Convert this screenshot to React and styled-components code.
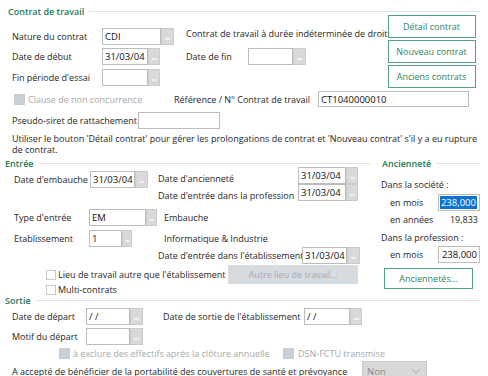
import styled, { createGlobalStyle } from "styled-components";

const GlobalStyle = createGlobalStyle`
  body {
    margin: 0;
    background: #ffffff;
    font-family: "Open Sans", "Noto Sans", Arial, sans-serif;
    font-size: 9px;
    color: #262626;
  }
  * { box-sizing: border-box; }
`;

const Page = styled.div`
  width: 488px;
  height: 376px;
  overflow: hidden;
  padding-top: 4px;
`;

// ? Group headers
const Legend = styled.div`
  display: flex;
  align-items: center;
  height: ${(p) => p.$h || 12}px;
  padding-left: ${(p) => p.$left || 5}px;
  padding-right: ${(p) => p.$right || 0}px;
  color: #227a55;
  font-weight: 600;
  font-size: 9px;
  &::after {
    content: "";
    flex: 1;
    height: 1px;
    margin-left: 5px;
    background: #e2e2e2;
  }
`;

const Row = styled.div`
  display: flex;
  align-items: ${(p) => p.$align || "center"};
  height: ${(p) => p.$h || 17}px;
  padding-left: ${(p) => p.$left || 0}px;
  margin-top: ${(p) => p.$top || 0}px;
  white-space: nowrap;
`;

const Label = styled.span`
  flex-shrink: 0;
  width: ${(p) => (p.$w ? `${p.$w}px` : "auto")};
  margin-left: ${(p) => p.$ml || 0}px;
  color: ${(p) => (p.$disabled ? "#a8a8a8" : "#262626")};
  text-align: ${(p) => p.$align || "left"};
  line-height: 11px;
`;

const TextBox = styled.div`
  flex-shrink: 0;
  width: ${(p) => p.$w}px;
  height: ${(p) => p.$h || 17}px;
  border: 1px solid #bcbcbc;
  background: #fff;
  padding: 0 2px;
  display: flex;
  align-items: center;
  justify-content: ${(p) => (p.$right ? "flex-end" : "flex-start")};
  font-size: 9.5px;
  color: #111;
`;

const Selected = styled.span`
  background: #0a74d6;
  color: #fff;
  padding: 0 1px;
`;

const Lookup = styled.div`
  flex-shrink: 0;
  width: ${(p) => p.$w || 13}px;
  height: 17px;
  border: 1px solid #cbcbcb;
  background: #d9d9d9;
  display: flex;
  align-items: flex-end;
  justify-content: center;
  padding-bottom: 4px;
  &::after {
    content: "";
    width: 5px;
    height: 2px;
    background: #efefef;
  }
`;

const Top = styled.div`
  display: flex;
  margin-top: -3px;
  padding-left: 12px;
  padding-right: 16px;
`;

const LeftRows = styled.div`
  flex: 1;
  display: flex;
  flex-direction: column;
  gap: 3px;
  padding-top: 13px;
`;

const ButtonStack = styled.div`
  display: flex;
  flex-direction: column;
  gap: 2px;
`;

const GreenButton = styled.div`
  width: ${(p) => p.$w || 88}px;
  height: ${(p) => p.$h || 23}px;
  margin-left: ${(p) => p.$ml || 0}px;
  margin-top: ${(p) => p.$top || 0}px;
  border: 1px solid #4f9f80;
  background: #fff;
  color: #2a8460;
  display: flex;
  align-items: center;
  justify-content: center;
  font-size: 9px;
`;

const GreyButton = styled.div`
  flex-shrink: 0;
  width: ${(p) => p.$w}px;
  height: ${(p) => p.$h || 19}px;
  margin-left: ${(p) => p.$ml || 0}px;
  background: #d6dbe0;
  color: #a3a9ae;
  display: flex;
  align-items: center;
  justify-content: center;
`;

const Check = styled.span`
  flex-shrink: 0;
  width: ${(p) => p.$size || 11}px;
  height: ${(p) => p.$size || 11}px;
  margin-left: ${(p) => p.$ml || 0}px;
  margin-right: ${(p) => p.$mr || 3}px;
  border: 1px solid ${(p) => (p.$disabled ? "#c3ccd4" : "#c9c9c9")};
  background: ${(p) => (p.$disabled ? "#c8d1da" : "#fff")};
`;

const Note = styled.p`
  margin: 4px 2px 0 12px;
  line-height: 11px;
`;

const Columns = styled.div`
  display: flex;
  margin-top: 2px;
`;

const EntreeCol = styled.div`
  width: 370px;
  flex-shrink: 0;
`;

const AncCol = styled.div`
  width: 103px;
  margin-left: 7px;
  flex-shrink: 0;
`;

const Pair = styled.div`
  display: flex;
  align-items: flex-start;
  margin-top: -2px;
  padding-left: 14px;
`;

const SubRows = styled.div`
  display: flex;
  flex-direction: column;
  margin-left: 10px;
`;

const Combo = styled.div`
  flex-shrink: 0;
  width: 65px;
  height: 20px;
  background: #d8d8d8;
  border: 1px solid #cbcbcb;
  color: #8c8c8c;
  display: flex;
  align-items: center;
  justify-content: space-between;
  padding: 0 6px 0 4px;
  font-size: 9.5px;
`;

const Chevron = () => (
  <svg width="8" height="5" viewBox="0 0 8 5">
    <path d="M0.5 0.5 L4 4 L7.5 0.5" fill="none" stroke="#a4a4a4" strokeWidth="1" />
  </svg>
);

export default function App() {
  return (
    <Page>
      <GlobalStyle />

      <Legend $left={8} $right={8} $h={14}>Contrat de travail</Legend>
      <Top>
        <LeftRows>
          <Row>
            <Label $w={90}>Nature du contrat</Label>
            <TextBox $w={59}>CDI</TextBox>
            <Lookup />
            <Label $ml={12} style={{ alignSelf: "flex-start" }}>
              Contrat de travail à durée indéterminée de droit
            </Label>
          </Row>
          <Row>
            <Label $w={90}>Date de début</Label>
            <TextBox $w={46}>31/03/04</TextBox>
            <Lookup $w={12} />
            <Label $w={62} $ml={26}>Date de fin</Label>
            <TextBox $w={45} />
            <Lookup />
          </Row>
          <Row $top={1}>
            <Label $w={90}>Fin période d'essai</Label>
            <TextBox $w={46} />
            <Lookup $w={12} />
          </Row>
        </LeftRows>
        <ButtonStack>
          <GreenButton>Détail contrat</GreenButton>
          <GreenButton>Nouveau contrat</GreenButton>
          <GreenButton>Anciens contrats</GreenButton>
        </ButtonStack>
      </Top>

      <Row $left={14} $top={3} $h={16}>
        <Check $disabled />
        <Label $w={146} $disabled>Clause de non concurrence</Label>
        <Label $w={144}>Référence / N° Contrat de travail</Label>
        <TextBox $w={151} $h={16}>CT1040000010</TextBox>
      </Row>
      <Row $left={12} $top={5}>
        <Label $w={126}>Pseudo-siret de rattachement</Label>
        <TextBox $w={82} />
      </Row>
      <Note>
        Utiliser le bouton 'Détail contrat' pour gérer les prolongations de contrat et
        'Nouveau contrat' s'il y a eu rupture de contrat.
      </Note>

      <Columns>
        <EntreeCol>
          <Legend>Entrée</Legend>
          <Pair>
            <Row $top={4}>
              <Label $w={76}>Date d'embauche</Label>
              <TextBox $w={45}>31/03/04</TextBox>
              <Lookup />
            </Row>
            <SubRows>
              <Row $align="flex-end">
                <Label $w={140}>Date d'ancienneté</Label>
                <TextBox $w={48}>31/03/04</TextBox>
                <Lookup $w={12} />
              </Row>
              <Row $align="flex-end">
                <Label $w={140}>Date d'entrée dans la profession</Label>
                <TextBox $w={48}>31/03/04</TextBox>
                <Lookup $w={12} />
              </Row>
            </SubRows>
          </Pair>
          <Row $left={14} $top={8}>
            <Label $w={75}>Type d'entrée</Label>
            <TextBox $w={57}>EM</TextBox>
            <Lookup $w={11} />
            <Label $ml={7}>Embauche</Label>
          </Row>
          <Row $left={14} $top={4}>
            <Label $w={75}>Etablissement</Label>
            <TextBox $w={33}>1</TextBox>
            <Lookup $w={10} />
            <Label $ml={32}>Informatique &amp; Industrie</Label>
          </Row>
          <Row $left={158}>
            <Label $w={144}>Date d'entrée dans l'établissement</Label>
            <TextBox $w={45}>31/03/04</TextBox>
            <Lookup />
          </Row>
          <Row $left={46} $top={1} $h={19}>
            <Check $size={10} $mr={2} />
            <Label $w={170}>Lieu de travail autre que l'établissement</Label>
            <GreyButton $w={130}>Autre lieu de travail...</GreyButton>
          </Row>
          <Row $left={46} $h={11}>
            <Check $size={10} $mr={2} />
            <Label>Multi-contrats</Label>
          </Row>
        </EntreeCol>

        <AncCol>
          <Legend $left={0}>Ancienneté</Legend>
          <Row $left={4} $top={9} $h={12}>
            <Label>Dans la société :</Label>
          </Row>
          <Row $left={13} $top={4}>
            <Label $w={48}>en mois</Label>
            <TextBox $w={42} $right>
              <Selected>238,000</Selected>
            </TextBox>
          </Row>
          <Row $left={13} $top={2} $h={12}>
            <Label $w={48}>en années</Label>
            <Label $w={40} $align="right">19,833</Label>
          </Row>
          <Row $left={4} $top={6} $h={12}>
            <Label>Dans la profession :</Label>
          </Row>
          <Row $left={13} $top={3}>
            <Label $w={48}>en mois</Label>
            <TextBox $w={42} $right>238,000</TextBox>
          </Row>
          <GreenButton $w={89} $h={21} $ml={7} $top={5}>
            Anciennetés...
          </GreenButton>
        </AncCol>
      </Columns>

      <Legend $right={8} $h={11}>Sortie</Legend>
      <Row $left={12} $top={2}>
        <Label $w={74}>Date de départ</Label>
        <TextBox $w={44}>/ /</TextBox>
        <Lookup />
        <Label $w={141} $ml={20}>Date de sortie de l'établissement</Label>
        <TextBox $w={46}>/ /</TextBox>
        <Lookup $w={12} />
      </Row>
      <Row $left={12} $top={3}>
        <Label $w={74}>Motif du départ</Label>
        <TextBox $w={44} />
        <Lookup />
      </Row>
      <Row $left={59} $top={2} $h={12}>
        <Check $disabled />
        <Label $w={210} $disabled>à exclure des effectifs après la clôture annuelle</Label>
        <Check $disabled $mr={4} />
        <Label $disabled>DSN-FCTU transmise</Label>
      </Row>
      <Row $left={12} $top={2} $h={20}>
        <Label $w={350}>
          A accepté de bénéficier de la portabilité des couvertures de santé et prévoyance
        </Label>
        <Combo>
          Non
          <Chevron />
        </Combo>
      </Row>
    </Page>
  );
}
